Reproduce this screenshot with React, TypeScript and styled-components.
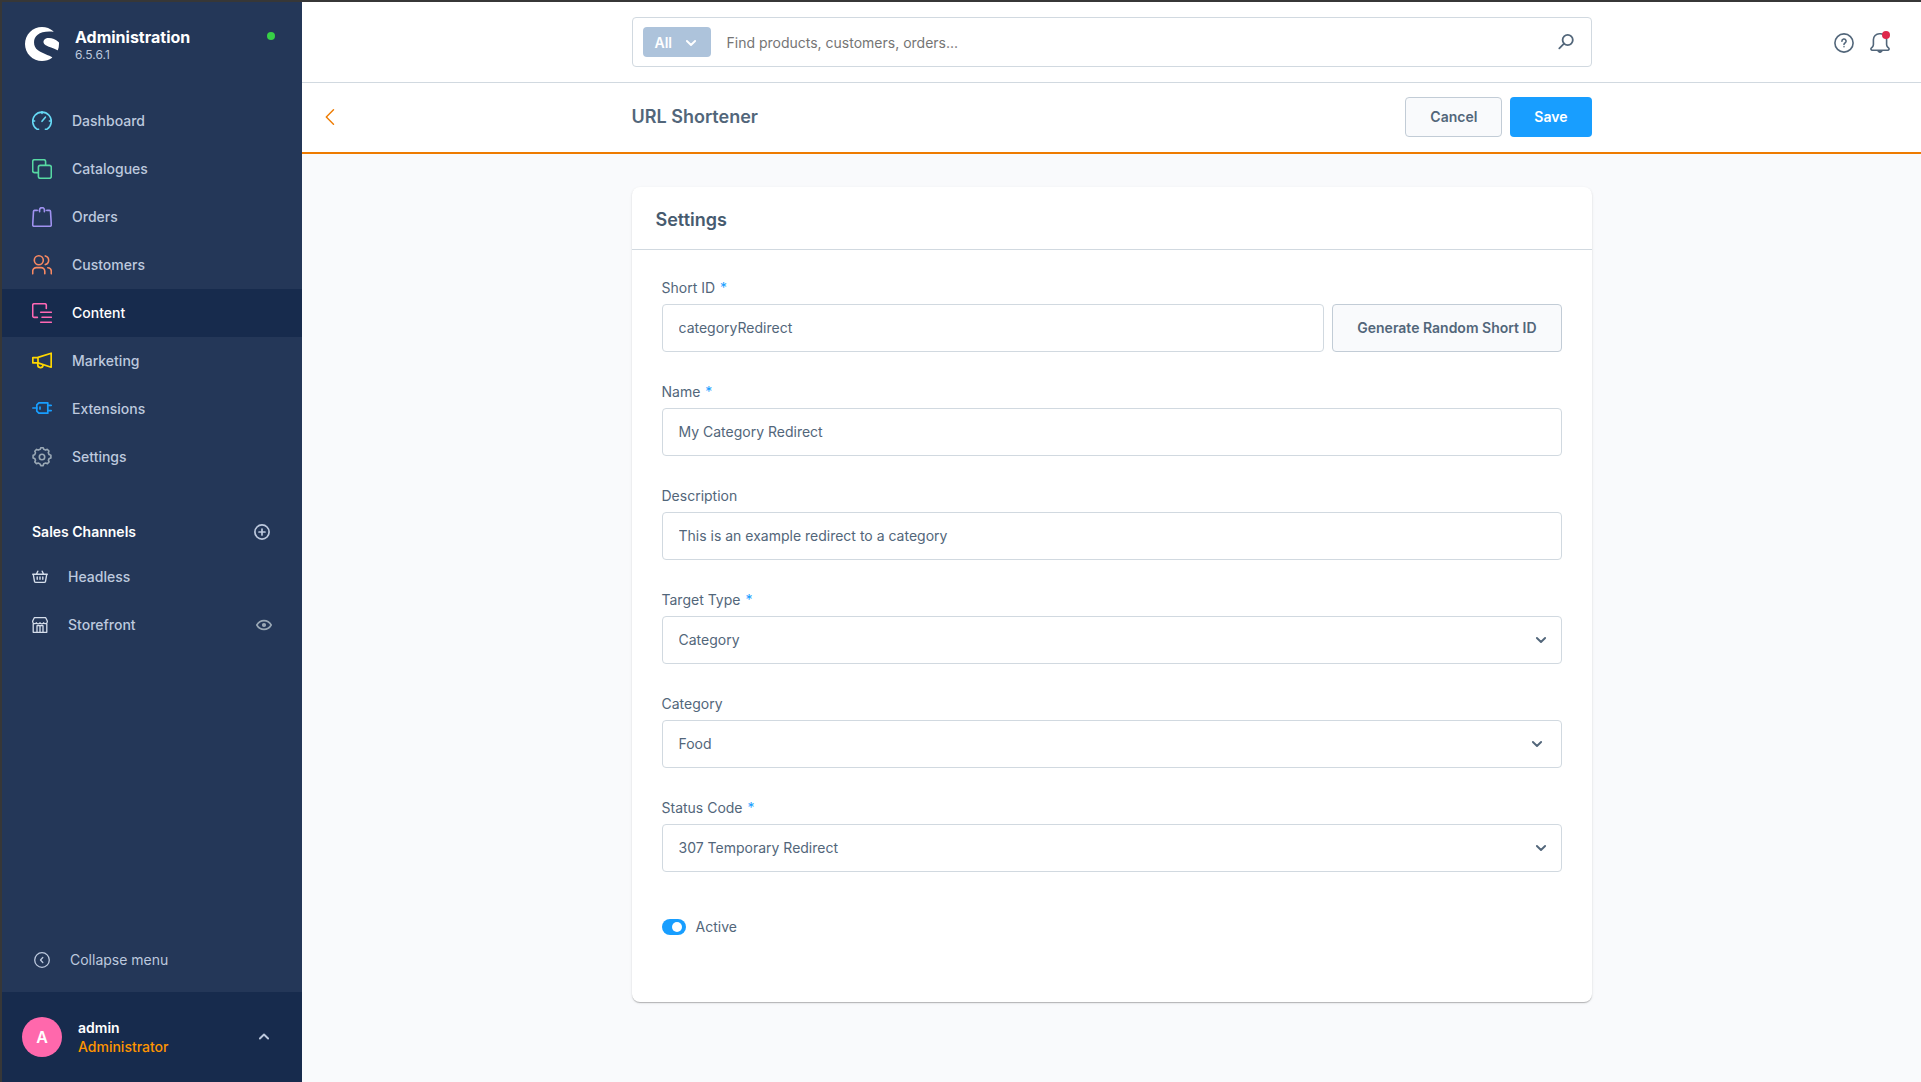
import React, { useState } from "react";
import type { ReactNode } from "react";
import styled, { createGlobalStyle } from "styled-components";
import { SiShopware } from "react-icons/si";

const color = {
  frame: "#373737",
  sidebar: "#243758",
  sidebarDark: "#172b4d",
  navText: "#bdc9de",
  text: "#52667a",
  heading: "#52667a",
  border: "#d1d9e0",
  page: "#f9fafc",
  brand: "#189eff",
  accent: "#ee7b00",
};

const GlobalStyle = createGlobalStyle`
  *, *::before, *::after { box-sizing: border-box; }
  body {
    margin: 0;
    background: ${color.page};
    color: ${color.text};
    font-family: Inter, "Liberation Sans", sans-serif;
    font-size: 14px;
    line-height: 20px;
    -webkit-font-smoothing: antialiased;
  }
  button, input, select { font: inherit; color: inherit; }
  button { cursor: pointer; }
  svg { display: block; flex: none; }
`;

/* ---------- Icons ---------- */

const Svg = styled.svg.attrs<{ $stroke?: number }>({ "aria-hidden": true })<{ $stroke?: number }>`
  fill: none;
  stroke: currentColor;
  stroke-width: ${(p) => p.$stroke ?? 1.6};
  stroke-linecap: round;
  stroke-linejoin: round;
`;

const DashboardIcon = () => (
  <Svg width="20" height="20" viewBox="0 0 20 20">
    <path d="M6.6 18.2H4.9A9.3 9.3 0 1 1 15.1 18.2H13.4" />
    <path d="M10 .8v1.6M.8 10h1.8M17.4 10h1.8M10 10.3 13.4 6.2" />
  </Svg>
);
const CatalogueIcon = () => (
  <Svg width="20" height="20" viewBox="0 0 20 20">
    <path d="M6.2 13.6H2.6a1.9 1.9 0 0 1-1.9-1.9V2.6A1.9 1.9 0 0 1 2.6.7h9.1a1.9 1.9 0 0 1 1.9 1.9v3.6" />
    <rect x="6.4" y="6.4" width="12.9" height="12.9" rx="1.9" />
  </Svg>
);
const OrderIcon = () => (
  <Svg width="20" height="20" viewBox="0 0 20 20">
    <path d="M5.2 3.4H2.6a1.1 1.1 0 0 0-1.1 1L.7 17.8a1.4 1.4 0 0 0 1.4 1.5h15.8a1.4 1.4 0 0 0 1.4-1.5L18.5 4.4a1.1 1.1 0 0 0-1.100-1H14.800" />
    <path d="M7.600 4.800V3a2.400 2.400 0 0 1 4.800 0v1.800M7.600 3.400h-.4M12.400 3.400h.4" />
  </Svg>
);
const CustomersIcon = () => (
  <Svg width="20" height="20" viewBox="0 0 20 20">
    <circle cx="6.800" cy="5.300" r="4.500" />
    <path d="M.7 18.700v-2.500a3.700 3.700 0 0 1 3.700-3.600h4.700a3.700 3.700 0 0 1 3.700 3.600v2.500" />
    <path d="M13.300.9a4.500 4.500 0 0 1 0 8.700M15.800 12.700a3.700 3.700 0 0 1 3.500 3.600v2.400" />
  </Svg>
);
const ContentIcon = () => (
  <Svg width="20" height="20" viewBox="0 0 20 20">
    <path d="M5.400 14.400H2.200A1.500 1.500 0 0 1 .7 12.900V2.200A1.500 1.500 0 0 1 2.200.7h10.600a1.500 1.500 0 0 1 1.500 1.500v3.200" />
    <path d="M8.700 9.200h10.600M10 14.200h9.300M8.700 19.200h10.600" />
  </Svg>
);
const MarketingIcon = () => (
  <Svg width="20" height="20" viewBox="0 0 20 20" $stroke={1.7}>
    <path d="M6 6.400 19.200 2.200v14L6 11.900M.8 6.600H6v5.300H.8z" />
    <path d="M5.800 12.200v1.600a2.600 2.600 0 0 0 5.200.3" />
  </Svg>
);
const PlugIcon = () => (
  <Svg width="20" height="20" viewBox="0 0 20 20" $stroke={1.7}>
    <path d="M.8 9h4M15.800 6.300h3.400M15.800 11.700h3.400M8 8v2" />
    <path d="M6.800 3.800h9v10.400h-9L4.800 12.200V5.800z" />
  </Svg>
);
const GearIcon = () => (
  <Svg width="20" height="20" viewBox="0 0 20 20">
    <circle cx="10" cy="10" r="2.700" />
    <path d="M8.300 2.200 8.800.8h2.400l.5 1.400 2 .9 1.500-.8 1.800 1.700-.7 1.600.8 2 1.800.6v2.700l-1.700.5-.8 2 .7 1.500-1.700 1.800-1.700-.7-2 .8-.5 1.800H8.700l-.6-1.700-1.900-.8-1.700.7-1.700-1.900.7-1.500-.8-2-1.600-.5V8.300l1.600-.6.8-1.900-.7-1.600 1.800-1.800 1.600.7z" />
  </Svg>
);
const BasketIcon = () => (
  <Svg width="16" height="16" viewBox="0 0 16 16" $stroke={1.4}>
    <path d="M.7 5.300h14.600M1.300 5.500l1.200 6.800a1.400 1.400 0 0 0 1.400 1.100h8.200a1.400 1.400 0 0 0 1.400-1.100l1.200-6.800M5.800 2.200 4.500 5M10.200 2.200 11.500 5M5.200 8v2.300M8 8v2.300M10.800 8v2.300" />
  </Svg>
);
const StoreIcon = () => (
  <Svg width="16" height="16" viewBox="0 0 16 16" $stroke={1.3}>
    <path d="M1.200 7v8.300h13.600V7M2.300.7h11.400L15.300 4v1a2 2 0 0 1-3.600.8A2.200 2.200 0 0 1 8 5.800a2.200 2.200 0 0 1-3.700 0A2 2 0 0 1 .7 5V4zM5 15.200V8.700h6v6.500M8 8.700v6.500" />
  </Svg>
);
const PlusCircleIcon = () => (
  <Svg width="16" height="16" viewBox="0 0 16 16" $stroke={1.7}>
    <circle cx="8" cy="8" r="7.100" />
    <path d="M8 5v6M5 8h6" />
  </Svg>
);
const EyeIcon = () => (
  <Svg width="16" height="16" viewBox="0 0 16 16" $stroke={1.6}>
    <path d="M.8 8C2.500 5 5 3.600 8 3.600S13.500 5 15.200 8C13.500 11 11 12.400 8 12.400S2.500 11 .8 8z" />
    <circle cx="8" cy="8" r="1.300" fill="currentColor" />
  </Svg>
);
const CollapseIcon = () => (
  <Svg width="16" height="16" viewBox="0 0 16 16" $stroke={1.3}>
    <circle cx="8" cy="8" r="7.300" />
    <path d="M8.800 5.500 6.500 8l2.300 2.500" />
  </Svg>
);
const ChevronIcon = ({ up }: { up?: boolean }) => (
  <Svg width="12" height="12" viewBox="0 0 12 12" $stroke={1.900}>
    <path d={up ? "M1.900 7.500 6 3.500l4.100 4" : "M1.900 4 6 8l4.100-4"} />
  </Svg>
);
const SearchIcon = () => (
  <Svg width="16" height="16" viewBox="0 0 16 16" $stroke={1.800}>
    <circle cx="9.700" cy="6" r="5.100" />
    <path d="M6 9.700 1.300 14.300" />
  </Svg>
);
const HelpIcon = () => (
  <Svg width="20" height="20" viewBox="0 0 20 20" $stroke={1.600}>
    <circle cx="10" cy="10" r="9.100" />
    <path d="M7.900 8.200a2.100 2.100 0 1 1 3.100 1.800c-.7.400-1 .8-1 1.500M10 13.700v.1" />
  </Svg>
);
const BellIcon = () => (
  <Svg width="20" height="20" viewBox="0 0 20 20" $stroke={1.600}>
    <path d="M2.200 17.200h15.600a1.300 1.300 0 0 0 .9-2.200l-1-.9a3.400 3.400 0 0 1-1.100-2.500V6.800A5.900 5.900 0 0 0 10.700.8H9.300a5.900 5.900 0 0 0-5.900 6v4.800a3.400 3.400 0 0 1-1.100 2.500l-1 .9a1.300 1.300 0 0 0 .9 2.200zM8.300 18.200 10 19.200l1.700-1" />
  </Svg>
);
const BackIcon = () => (
  <Svg width="16" height="16" viewBox="0 0 16 16" $stroke={1.400}>
    <path d="M11.500.8 4.300 8l7.200 7.200" />
  </Svg>
);

/* ---------- Shell ---------- */

const Shell = styled.div`
  display: flex;
  min-height: 100vh;
  border: solid ${color.frame};
  border-width: 2px 0 0 2px;
`;

const Sidebar = styled.aside`
  display: flex;
  flex: none;
  flex-direction: column;
  width: 300px;
  background: ${color.sidebar};
  color: ${color.navText};
`;

const Brand = styled.header`
  display: flex;
  gap: 16px;
  padding: 25px 27px 0 23px;
  height: 95px;
  color: #fff;
`;

const BrandText = styled.div`
  flex: 1;
`;

const BrandName = styled.div`
  font-size: 16px;
  font-weight: 700;
  line-height: 20px;
`;

const Version = styled.div`
  color: ${color.navText};
  font-size: 12px;
  line-height: 16px;
`;

const StatusDot = styled.span`
  width: 8px;
  height: 8px;
  margin-top: 5px;
  border-radius: 50%;
  background: #37d046;
`;

const NavList = styled.ul`
  margin: 0;
  padding: 0;
  list-style: none;
`;

const NavLink = styled.a<{ $active?: boolean }>`
  display: flex;
  align-items: center;
  gap: 20px;
  height: 48px;
  padding: 0 30px;
  background: ${(p) => (p.$active ? color.sidebarDark : "transparent")};
  color: ${(p) => (p.$active ? "#fff" : color.navText)};
  font-weight: 500;
  text-decoration: none;
`;

const NavIcon = styled.span<{ $color: string }>`
  color: ${(p) => p.$color};
`;

const NavLabel = styled.span`
  flex: 1;
`;

const SectionHead = styled.div`
  display: flex;
  align-items: center;
  justify-content: space-between;
  height: 36px;
  margin: 33px 0 3px;
  padding: 0 32px 0 30px;
`;

const SectionTitle = styled.h2`
  margin: 0;
  color: #fff;
  font-size: 14px;
  font-weight: 600;
  line-height: 20px;
`;

const PlainButton = styled.button`
  display: flex;
  align-items: center;
  padding: 0;
  border: 0;
  background: none;
`;

const CollapseButton = styled(PlainButton)`
  gap: 20px;
  height: 64px;
  margin-top: auto;
  padding: 0 32px;
`;

const UserBar = styled.footer`
  display: flex;
  align-items: center;
  gap: 16px;
  height: 90px;
  padding: 0 32px 0 20px;
  background: ${color.sidebarDark};
`;

const Avatar = styled.span`
  display: grid;
  place-items: center;
  width: 40px;
  height: 40px;
  border-radius: 50%;
  background: #ff68ac;
  color: #fff;
  font-size: 16px;
  font-weight: 600;
`;

const UserText = styled.div`
  flex: 1;
  line-height: 19px;
`;

const UserName = styled.div`
  color: #fff;
  font-weight: 600;
`;

const UserRole = styled.div`
  color: #ff9500;
  font-weight: 500;
`;

/* ---------- Main column ---------- */

const Main = styled.div`
  flex: 1;
  min-width: 0;
  background: ${color.page};
`;

const columns = "minmax(0, 1fr) minmax(0, 960px) minmax(0, 1fr)";

const TopBar = styled.header`
  display: grid;
  grid-template-columns: ${columns};
  align-items: center;
  height: 81px;
  border-bottom: 1px solid ${color.border};
  background: #fff;
`;

const SearchBox = styled.form`
  display: flex;
  grid-column: 2;
  align-items: center;
  height: 50px;
  padding: 0 17px 0 10px;
  border: 1px solid ${color.border};
  border-radius: 4px;
`;

const ScopeButton = styled.button`
  display: flex;
  align-items: center;
  justify-content: space-between;
  width: 68px;
  height: 30px;
  padding: 1px 14px 0 12px;
  border: 0;
  border-radius: 4px;
  background: #adc3db;
  color: #fff;
  font-weight: 600;
`;

const SearchInput = styled.input`
  flex: 1;
  min-width: 0;
  padding: 2px 16px 0;
  border: 0;
  outline: 0;
  background: none;
  &::placeholder { color: #757575; opacity: 1; }
`;

const TopActions = styled.div`
  display: flex;
  justify-content: flex-end;
  gap: 16px;
  padding: 2px 31px 0 0;
`;

const BellButton = styled(PlainButton)`
  position: relative;
`;

const BellBadge = styled.span`
  position: absolute;
  top: -2px;
  right: 0;
  width: 8px;
  height: 8px;
  border-radius: 50%;
  background: #de294c;
`;

const PageHead = styled.div`
  display: grid;
  grid-template-columns: ${columns};
  align-items: center;
  height: 71px;
  padding-bottom: 1px;
  border-bottom: 2px solid ${color.accent};
  background: #fff;
`;

const BackLink = styled.a`
  justify-self: start;
  padding: 4px 20px;
  color: ${color.accent};
`;

const TitleRow = styled.div`
  display: flex;
  align-items: center;
  justify-content: space-between;
`;

const PageTitle = styled.h1`
  margin: 0;
  color: ${color.heading};
  font-size: 18px;
  font-weight: 600;
  line-height: 24px;
`;

const ButtonRow = styled.div`
  display: flex;
  gap: 8px;
`;

const Button = styled.button<{ $primary?: boolean; $tall?: boolean }>`
  flex: none;
  height: ${(p) => (p.$tall ? 48 : 40)}px;
  padding: 0 24px;
  border: ${(p) => (p.$primary ? "0" : "1px solid #c2ccd6")};
  border-radius: 4px;
  background: ${(p) => (p.$primary ? color.brand : color.page)};
  color: ${(p) => (p.$primary ? "#fff" : color.text)};
  font-weight: 600;
`;

const Content = styled.main`
  display: grid;
  grid-template-columns: ${columns};
  padding: 33px 0 64px;
`;

const Card = styled.section`
  grid-column: 2;
  border-radius: 8px;
  background: #fff;
  box-shadow: 0 1px 1px rgba(0, 0, 0, 0.14), 0 2px 1px -1px rgba(0, 0, 0, 0.1), 0 1px 3px rgba(0, 0, 0, 0.1);
`;

const CardTitle = styled.h2`
  margin: 0;
  padding: 21px 24px 17px;
  border-bottom: 1px solid ${color.border};
  color: #475b6f;
  font-size: 18px;
  font-weight: 600;
  line-height: 24px;
`;

const CardBody = styled.form`
  display: flex;
  flex-direction: column;
  gap: 30px;
  padding: 28px 30px 65px;
`;

const FieldRow = styled.div`
  display: flex;
  align-items: flex-end;
  gap: 8px;
`;

const Field = styled.div`
  display: flex;
  flex: 1;
  flex-direction: column;
  gap: 6px;
  min-width: 0;
`;

const Required = styled.span`
  margin-left: 5px;
  color: ${color.brand};
`;

const TextInput = styled.input`
  width: 100%;
  height: 48px;
  padding: 0 16px 1px;
  border: 1px solid ${color.border};
  border-radius: 4px;
  background: #fff;
`;

const SelectWrap = styled.div`
  position: relative;
`;

const Select = styled.select`
  width: 100%;
  height: 48px;
  padding: 0 44px 0 16px;
  border: 1px solid ${color.border};
  border-radius: 4px;
  appearance: none;
  background: #fff;
`;

const SelectArrow = styled.span<{ $inset?: boolean }>`
  position: absolute;
  top: 18px;
  right: ${(p) => (p.$inset ? 19 : 15)}px;
  pointer-events: none;
`;

const SwitchRow = styled.label`
  display: flex;
  align-items: center;
  align-self: flex-start;
  gap: 10px;
  margin-top: 15px;
`;

const Switch = styled.input`
  display: grid;
  align-items: center;
  width: 24px;
  height: 16px;
  margin: 0;
  padding: 0 4px;
  border-radius: 8px;
  appearance: none;
  background: #c2ccd6;
  &::before {
    content: "";
    width: 10px;
    height: 10px;
    border-radius: 50%;
    background: #fff;
  }
  &:checked { background: ${color.brand}; }
  &:checked::before { justify-self: end; }
`;

const navItems: { label: string; tint: string; icon: ReactNode; active?: boolean }[] = [
  { label: "Dashboard", tint: "#66d9f5", icon: <DashboardIcon /> },
  { label: "Catalogues", tint: "#57d9a3", icon: <CatalogueIcon /> },
  { label: "Orders", tint: "#a092f0", icon: <OrderIcon /> },
  { label: "Customers", tint: "#f88962", icon: <CustomersIcon /> },
  { label: "Content", tint: "#ff68b4", icon: <ContentIcon />, active: true },
  { label: "Marketing", tint: "#ffd700", icon: <MarketingIcon /> },
  { label: "Extensions", tint: "#189eff", icon: <PlugIcon /> },
  { label: "Settings", tint: "#9aa8b5", icon: <GearIcon /> },
];

const FieldLabel = ({ id, text, required }: { id: string; text: string; required?: boolean }) => (
  <label htmlFor={id}>
    {text}
    {required && <Required>*</Required>}
  </label>
);

interface SelectFieldProps {
  id: string;
  label: string;
  options: string[];
  required?: boolean;
  inset?: boolean;
}

const SelectField = ({ id, label, options, required, inset }: SelectFieldProps) => (
  <Field>
    <FieldLabel id={id} text={label} required={required} />
    <SelectWrap>
      <Select id={id}>
        {options.map((o) => (
          <option key={o}>{o}</option>
        ))}
      </Select>
      <SelectArrow $inset={inset}>
        <ChevronIcon />
      </SelectArrow>
    </SelectWrap>
  </Field>
);

export default function App() {
  const [shortId, setShortId] = useState("categoryRedirect");
  const randomise = () => setShortId(Math.random().toString(36).slice(2, 10));

  return (
    <>
      <GlobalStyle />
      <Shell>
        <Sidebar>
          <Brand>
            <SiShopware size={34} aria-hidden />
            <BrandText>
              <BrandName>Administration</BrandName>
              <Version>6.5.6.1</Version>
            </BrandText>
            <StatusDot />
          </Brand>
          <nav>
            <NavList>
              {navItems.map((item) => (
                <li key={item.label}>
                  <NavLink href="#" $active={item.active}>
                    <NavIcon $color={item.tint}>{item.icon}</NavIcon>
                    <NavLabel>{item.label}</NavLabel>
                  </NavLink>
                </li>
              ))}
            </NavList>
            <SectionHead>
              <SectionTitle>Sales Channels</SectionTitle>
              <PlainButton type="button" aria-label="Add sales channel">
                <PlusCircleIcon />
              </PlainButton>
            </SectionHead>
            <NavList>
              <li>
                <NavLink href="#">
                  <NavIcon $color="#d5deeb"><BasketIcon /></NavIcon>
                  <NavLabel>Headless</NavLabel>
                </NavLink>
              </li>
              <li>
                <NavLink href="#">
                  <NavIcon $color="#d5deeb"><StoreIcon /></NavIcon>
                  <NavLabel>Storefront</NavLabel>
                  <NavIcon $color="#9aa8b5"><EyeIcon /></NavIcon>
                </NavLink>
              </li>
            </NavList>
          </nav>
          <CollapseButton type="button">
            <CollapseIcon />
            Collapse menu
          </CollapseButton>
          <UserBar>
            <Avatar>A</Avatar>
            <UserText>
              <UserName>admin</UserName>
              <UserRole>Administrator</UserRole>
            </UserText>
            <PlainButton type="button" aria-label="User menu">
              <ChevronIcon up />
            </PlainButton>
          </UserBar>
        </Sidebar>

        <Main>
          <TopBar>
            <SearchBox role="search" onSubmit={(e) => e.preventDefault()}>
              <ScopeButton type="button">
                All
                <ChevronIcon />
              </ScopeButton>
              <SearchInput aria-label="Search" placeholder="Find products, customers, orders..." />
              <PlainButton type="submit" aria-label="Start search">
                <SearchIcon />
              </PlainButton>
            </SearchBox>
            <TopActions>
              <PlainButton type="button" aria-label="Help">
                <HelpIcon />
              </PlainButton>
              <BellButton type="button" aria-label="Notifications">
                <BellIcon />
                <BellBadge />
              </BellButton>
            </TopActions>
          </TopBar>
          <PageHead>
            <BackLink href="#" aria-label="Back">
              <BackIcon />
            </BackLink>
            <TitleRow>
              <PageTitle>URL Shortener</PageTitle>
              <ButtonRow>
                <Button type="button">Cancel</Button>
                <Button type="button" $primary>Save</Button>
              </ButtonRow>
            </TitleRow>
          </PageHead>
          <Content>
            <Card>
              <CardTitle>Settings</CardTitle>
              <CardBody onSubmit={(e) => e.preventDefault()}>
                <FieldRow>
                  <Field>
                    <FieldLabel id="short-id" text="Short ID" required />
                    <TextInput id="short-id" value={shortId} onChange={(e) => setShortId(e.target.value)} />
                  </Field>
                  <Button type="button" $tall onClick={randomise}>Generate Random Short ID</Button>
                </FieldRow>
                <Field>
                  <FieldLabel id="name" text="Name" required />
                  <TextInput id="name" defaultValue="My Category Redirect" />
                </Field>
                <Field>
                  <FieldLabel id="description" text="Description" />
                  <TextInput id="description" defaultValue="This is an example redirect to a category" />
                </Field>
                <SelectField id="target-type" label="Target Type" options={["Category"]} required />
                <SelectField id="category" label="Category" options={["Food"]} inset />
                <SelectField id="status" label="Status Code" options={["307 Temporary Redirect"]} required />
                <SwitchRow>
                  <Switch type="checkbox" role="switch" defaultChecked />
                  Active
                </SwitchRow>
              </CardBody>
            </Card>
          </Content>
        </Main>
      </Shell>
    </>
  );
}
